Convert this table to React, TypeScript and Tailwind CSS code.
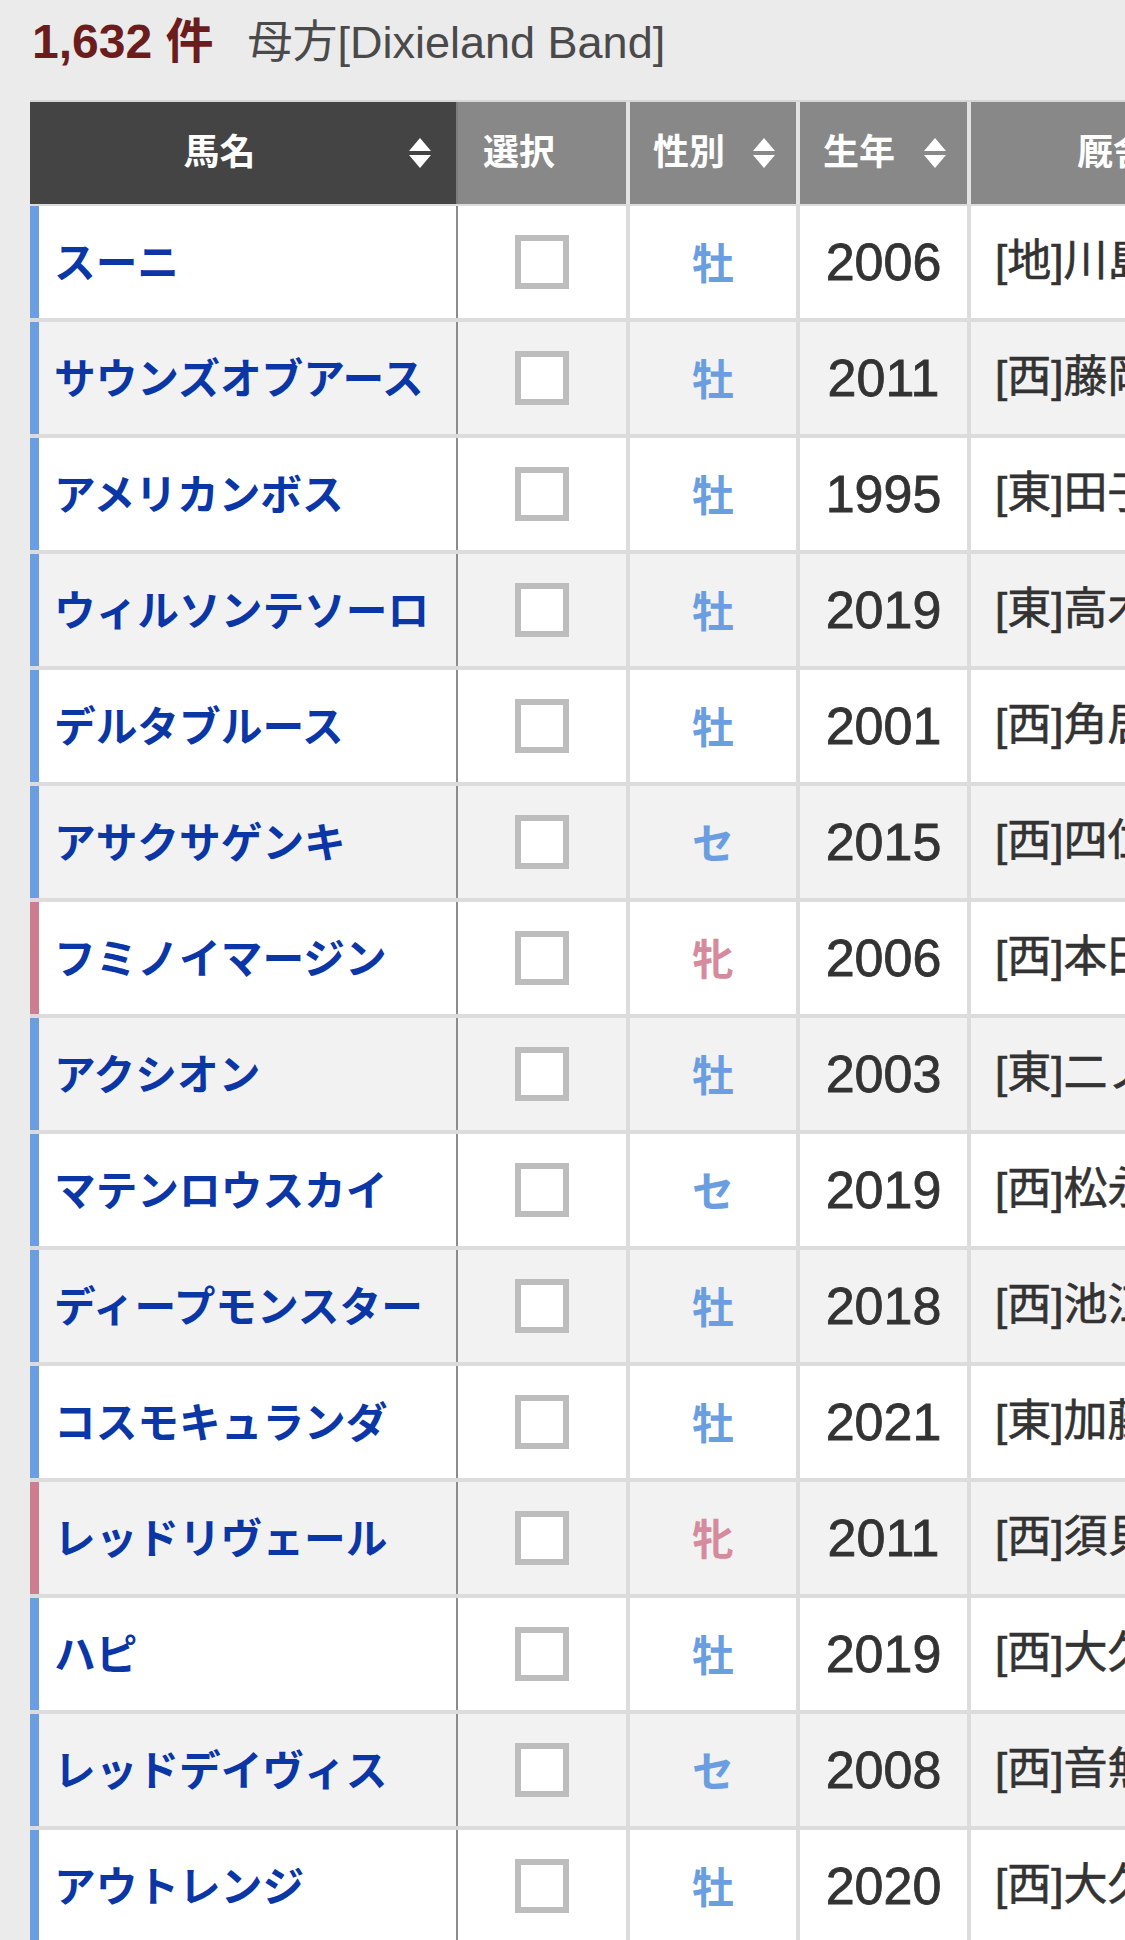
import React from "react";

type Horse = {
  name: string;
  sex: "牡" | "牝" | "セ";
  year: number;
  stable: string;
};

const horses: Horse[] = [
  { name: "スーニ", sex: "牡", year: 2006, stable: "[地]川島正行" },
  { name: "サウンズオブアース", sex: "牡", year: 2011, stable: "[西]藤岡健一" },
  { name: "アメリカンボス", sex: "牡", year: 1995, stable: "[東]田子冬樹" },
  { name: "ウィルソンテソーロ", sex: "牡", year: 2019, stable: "[東]高木登" },
  { name: "デルタブルース", sex: "牡", year: 2001, stable: "[西]角居勝彦" },
  { name: "アサクサゲンキ", sex: "セ", year: 2015, stable: "[西]四位洋文" },
  { name: "フミノイマージン", sex: "牝", year: 2006, stable: "[西]本田優" },
  { name: "アクシオン", sex: "牡", year: 2003, stable: "[東]二ノ宮敬宇" },
  { name: "マテンロウスカイ", sex: "セ", year: 2019, stable: "[西]松永幹夫" },
  { name: "ディープモンスター", sex: "牡", year: 2018, stable: "[西]池江泰寿" },
  { name: "コスモキュランダ", sex: "牡", year: 2021, stable: "[東]加藤士津八" },
  { name: "レッドリヴェール", sex: "牝", year: 2011, stable: "[西]須貝尚介" },
  { name: "ハピ", sex: "牡", year: 2019, stable: "[西]大久保龍志" },
  { name: "レッドデイヴィス", sex: "セ", year: 2008, stable: "[西]音無秀孝" },
  { name: "アウトレンジ", sex: "牡", year: 2020, stable: "[西]大久保龍志" },
];

const SortIcon = () => (
  <svg width="22" height="30" viewBox="0 0 22 30" className="shrink-0">
    <polygon points="11,0 22,13 0,13" fill="#fff" />
    <polygon points="0,17 22,17 11,30" fill="#fff" />
  </svg>
);

const App = () => {
  return (
    <div className="w-[1125px] h-[1940px] overflow-hidden bg-[#ebebeb] font-['Liberation_Sans','Noto_Sans_CJK_JP',sans-serif]">
      {/* 件数 */}
      <div className="h-[100px] pl-[32px] pt-[18px] flex items-baseline">
        <span className="text-[48px] leading-none font-bold text-[#6b1c1c]">
          1,632 件
        </span>
        <span className="ml-[34px] text-[45px] leading-none text-[#4a4a4a]">
          母方[Dixieland Band]
        </span>
      </div>

      <div className="ml-[30px] w-max border-t-2 border-[#d6d6d6]">
        {/* header */}
        <div className="flex h-[104px] border-b-2 border-[#dcdcdc] text-white text-[36px] font-bold font-['Noto_Sans_CJK_JP',sans-serif]">
          <div className="w-[428px] bg-[#444444] border-r-2 border-[#7c7c7c] flex items-center pr-[25px]">
            <span className="flex-1 text-center pb-[8px]">馬名</span>
            <SortIcon />
          </div>
          <div className="w-[172px] bg-[#888888] border-r-4 border-[#e2e2e2] flex items-center pl-[25px] pb-[8px]">
            選択
          </div>
          <div className="w-[170px] bg-[#888888] border-r-4 border-[#e2e2e2] flex items-center justify-between pl-[23px] pr-[21px]">
            <span className="pb-[8px]">性別</span>
            <SortIcon />
          </div>
          <div className="w-[171px] bg-[#888888] border-r-4 border-[#e2e2e2] flex items-center justify-between pl-[23px] pr-[21px]">
            <span className="pb-[8px]">生年</span>
            <SortIcon />
          </div>
          <div className="w-[284px] bg-[#888888] flex items-center justify-center pb-[8px]">
            厩舎
          </div>
        </div>

        {/* rows */}
        {horses.map((h, i) => (
          <div
            key={h.name}
            className={
              "flex h-[116px] border-b-4 border-[#dcdcdc] " +
              (i % 2 === 0 ? "bg-white" : "bg-[#f2f2f2]")
            }
          >
            <div
              className={
                "w-[428px] border-l-[9px] border-r-2 border-r-[#8c8c8c] flex items-center pl-[15px] pb-[4px] " +
                (h.sex === "牝" ? "border-l-[#cc7d8f]" : "border-l-[#6a9ee0]")
              }
            >
              <span className="text-[41.7px] font-bold text-[#0a36a6] font-['Noto_Sans_CJK_JP',sans-serif] whitespace-nowrap">
                {h.name}
              </span>
            </div>
            <div className="w-[172px] border-r-4 border-[#dcdcdc] flex items-center justify-center">
              <div className="w-[54px] h-[54px] border-[6px] border-[#bdbdbd] bg-white" />
            </div>
            <div className="w-[170px] border-r-4 border-[#dcdcdc] flex items-center justify-center pb-[4px]">
              <span
                className={
                  "text-[42px] font-bold font-['Noto_Sans_CJK_JP',sans-serif] " +
                  (h.sex === "牝" ? "text-[#d68a9e]" : "text-[#6a9ee0]")
                }
              >
                {h.sex}
              </span>
            </div>
            <div className="w-[171px] border-r-4 border-[#dcdcdc] flex items-center justify-center">
              <span className="text-[52px] text-[#333333] [-webkit-text-stroke:0.8px_#333333]">
                {h.year}
              </span>
            </div>
            <div className="w-[284px] flex items-center pl-[24px] pb-[2px]">
              <span className="text-[44px] text-[#333333] whitespace-nowrap [-webkit-text-stroke:0.6px_#333333]">
                {h.stable}
              </span>
            </div>
          </div>
        ))}
      </div>
    </div>
  );
};

export default App;
